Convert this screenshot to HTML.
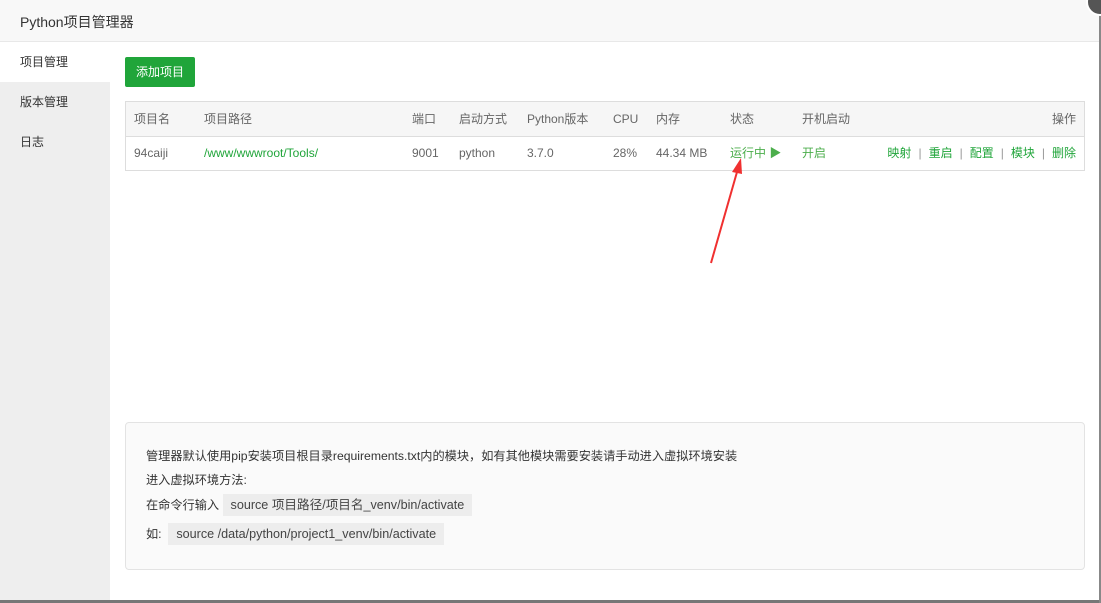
<!DOCTYPE html>
<html><head><meta charset="utf-8"><style>
*{margin:0;padding:0;box-sizing:border-box}
body{width:1101px;height:603px;overflow:hidden;background:#fff;font-family:"Liberation Sans","Noto Sans CJK SC",sans-serif;font-size:12px;color:#555;position:relative}
.hdr{position:absolute;left:0;top:0;width:1099px;height:42px;background:#f8f8f8;border-bottom:1px solid #e8e8e8;font-size:14px;color:#333;padding:12px 0 0 20px}
.side{position:absolute;left:0;top:42px;width:110px;height:558px;background:#eee}
.side div{height:40px;line-height:40px;padding-left:20px;color:#333;font-size:12px}
.side .on{background:#fff}
.btn{position:absolute;left:125px;top:57px;width:70px;height:30px;background:#20a53a;color:#fff;border-radius:2px;font-size:12px;line-height:30px;text-align:center}
.tbl{position:absolute;left:125px;top:101px;width:960px;height:70px;border:1px solid #ddd}
.th{position:absolute;left:0;top:0;width:958px;height:35px;background:#f6f6f6;border-bottom:1px solid #ddd}
.c{position:absolute;white-space:nowrap;color:#666;height:20px;line-height:20px}
.g{color:#20a53a}.lg{color:#4cae4c}
.ops span{color:#999;margin:0 7px}
.info{position:absolute;left:125px;top:422px;width:960px;height:148px;background:#fafafa;border:1px solid #e3e3e3;border-radius:4px;padding:23px 0 0 20px;color:#333;font-size:12.2px}
.info p{height:24px;line-height:20px;white-space:nowrap}
.code{background:#ededed;padding:4px 8px;color:#444;font-size:12.6px}
.bot{position:absolute;left:0;top:600px;width:1101px;height:3px;background:#777}
.rb{position:absolute;left:1099px;top:0;width:2px;height:603px;background:#888}
.close{position:absolute;left:1086px;top:-12px;width:28px;height:28px;border-radius:50%;background:#555;border:2px solid #fff}
</style></head><body>
<div class="hdr">Python项目管理器</div>
<div class="side"><div class="on">项目管理</div><div>版本管理</div><div>日志</div></div>
<div class="btn">添加项目</div>
<div class="tbl"><div class="th"></div></div>
<div class="c" style="left:134px;top:109px">项目名</div>
<div class="c" style="left:204px;top:109px">项目路径</div>
<div class="c" style="left:412px;top:109px">端口</div>
<div class="c" style="left:459px;top:109px">启动方式</div>
<div class="c" style="left:527px;top:109px">Python版本</div>
<div class="c" style="left:613px;top:109px">CPU</div>
<div class="c" style="left:656px;top:109px">内存</div>
<div class="c" style="left:730px;top:109px">状态</div>
<div class="c" style="left:802px;top:109px">开机启动</div>
<div class="c" style="right:25px;top:109px">操作</div>
<div class="c" style="left:134px;top:143px">94caiji</div>
<div class="c g" style="left:204px;top:143px">/www/wwwroot/Tools/</div>
<div class="c" style="left:412px;top:143px">9001</div>
<div class="c" style="left:459px;top:143px">python</div>
<div class="c" style="left:527px;top:143px">3.7.0</div>
<div class="c" style="left:613px;top:143px">28%</div>
<div class="c" style="left:656px;top:143px">44.34 MB</div>
<div class="c lg" style="left:730px;top:143px">运行中 ▶</div>
<div class="c lg" style="left:802px;top:143px">开启</div>
<div class="c g ops" style="right:25px;top:143px">映射<span>|</span>重启<span>|</span>配置<span>|</span>模块<span>|</span>删除</div>
<svg style="position:absolute;left:0;top:0" width="1101" height="603"><line x1="711" y1="263" x2="737" y2="172" stroke="#f03030" stroke-width="2"/><polygon points="741,158 732,172 742,174" fill="#f03030"/></svg>
<div class="info">
<p>管理器默认使用pip安装项目根目录requirements.txt内的模块，如有其他模块需要安装请手动进入虚拟环境安装</p>
<p>进入虚拟环境方法:</p>
<p style="height:29px;line-height:22px">在命令行输入 <span class="code">source 项目路径/项目名_venv/bin/activate</span></p>
<p style="line-height:22px">如:&nbsp; <span class="code">source /data/python/project1_venv/bin/activate</span></p>
</div>
<div class="bot"></div><div class="rb"></div><div class="close"></div>
</body></html>
